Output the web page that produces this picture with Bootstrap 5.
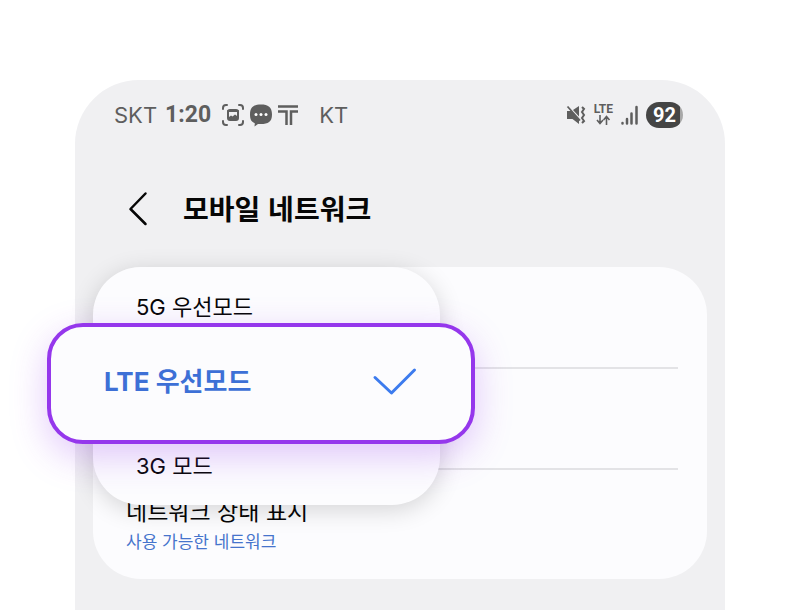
<!DOCTYPE html>
<html lang="ko">
<head>
<meta charset="utf-8">
<meta name="viewport" content="width=device-width, initial-scale=1">
<title>모바일 네트워크</title>
<link href="https://cdn.jsdelivr.net/npm/bootstrap@5.3.0/dist/css/bootstrap.min.css" rel="stylesheet">
<style>
body { background: #fff; color: #060606; font-family: Inter, "Noto Sans CJK KR", sans-serif; }
.stage { padding: 80px 75px 0; }
.phone { background: #f0f0f2; border-radius: 64px 64px 0 0; padding: 18px 18px 0; }
.status { height: 33px; padding: 0 24px 0 21px; color: #5e5e5e; }
.carrier { font: 400 22px/32px Inter, sans-serif; }
.clock { font: 700 23px/32px Roboto, sans-serif; margin-right: 10px; }
.lte { font: 700 12px/11px Roboto, sans-serif; }
.battery { background: linear-gradient(90deg, #454545 93%, #a8a8a8 93%); color: #fff; border-radius: 13px; width: 37px; height: 26px; font: 700 20px/26px Roboto, sans-serif; }
.topbar { height: 136px; padding: 17px 32px 0; }
.back { color: #060606; }
.heading { font-family: "Noto Sans CJK KR", sans-serif; font-size: 28px; line-height: 40px; font-weight: 700; }
.panel { background: #fcfcfe; border-radius: 48px; padding: 0 29px 23px 33px; }
.setting { height: 102px; border-bottom: 2px solid #e3e3e6; }
.setting + .setting { height: 101px; }
.state { padding-top: 26px; color: #060606; }
.state-name { font-size: 23px; line-height: 32px; }
.state-note { font-size: 17px; line-height: 28px; color: #4674cc; }
.modes { width: 347px; border-radius: 48px; background: #fcfcfe; box-shadow: 0 5px 24px rgba(0,0,0,.16); }
.mode { font-size: 22px; line-height: 32px; padding: 0 43px; color: #060606; }
.mode-first { padding-top: 24px; }
.mode-last { padding-top: 6px; padding-bottom: 23px; }
.mode-on { margin: 0 -35px 0 -46px; height: 121px; border: 4px solid #9537ec; border-radius: 36px; background: #fcfcfe; padding: 0 54px 4px 53px; color: #3d70d6; font-size: 26px; line-height: 40px; font-weight: 700; box-shadow: 0 12px 36px rgba(149,55,236,.27); }
.tick { margin-bottom: 2px; }
</style>
<script src="https://cdn.jsdelivr.net/npm/bootstrap@5.3.0/dist/js/bootstrap.bundle.min.js"></script>
</head>
<body>
<div class="stage min-vh-100 d-flex flex-column">
<main class="phone flex-grow-1">
  <div class="status d-flex align-items-center justify-content-between">
    <div class="d-flex align-items-center">
      <span class="carrier me-2">SKT</span>
      <span class="clock">1:20</span>
      <svg class="me-1" width="24" height="24" viewBox="0 0 24 24" fill="none" stroke="currentColor" stroke-width="2" stroke-linecap="round" aria-hidden="true"><path d="M2 6V5q0-3 3-3h1M18 2h1q3 0 3 3v1M22 18v1q0 3-3 3h-1M6 22H5q-3 0-3-3v-1"/><rect x="7" y="7" width="10" height="10" rx="2"/><path d="M7 8h10" stroke-width="2"/><path d="M8 16v-2l2-1.500 1.500 1 2.500-2 2 1.500v3H8z" fill="currentColor" stroke="none"/></svg>
      <svg width="24" height="24" viewBox="0 0 24 24" aria-hidden="true"><path fill="currentColor" d="M12 1.500C19 1.500 23 4 23 11.500S19 21 12 21H9l-3.500 2.500.3-3.300C2 18.500 1 16 1 11.500 1 4 5 1.500 12 1.500z"/><g fill="#fff"><circle cx="7" cy="11.500" r="1.500"/><circle cx="12" cy="11.500" r="1.500"/><circle cx="17" cy="11.500" r="1.500"/></g></svg>
      <svg class="ms-1 me-3" width="22" height="22" viewBox="0 0 22 22" fill="none" stroke="currentColor" stroke-width="2.500" aria-hidden="true"><path d="M1 2.500h20M1 7.500h8.500v13.500M21 7.500h-7v13.500"/></svg>
      <span class="carrier ms-1">KT</span>
    </div>
    <div class="d-flex align-items-center">
      <svg class="me-2" width="20" height="22" viewBox="0 0 20 22" aria-hidden="true"><path fill="currentColor" d="M1 7h4l8 8.500V20L6.500 15H1zM7 6l6-4v10.500z"/><path d="M1.500 2.500l12.500 14" stroke="currentColor" stroke-width="1.800"/><path d="M16 3l2 2-2 3 2 3-2 3 2 3-2 2" fill="none" stroke="currentColor" stroke-width="2"/></svg>
      <span class="d-flex flex-column align-items-center me-2"><span class="lte">LTE</span><svg width="16" height="10" viewBox="0 0 16 10" fill="none" stroke="currentColor" stroke-width="1.600" aria-hidden="true"><path d="M5 0v8M2 5l3 3.500L8 5M11.500 10V2M8.500 5l3-3.500 3 3.500"/></svg></span>
      <svg class="me-2" width="17" height="20" viewBox="0 0 17 20" stroke="currentColor" stroke-width="2.500" stroke-linecap="round" aria-hidden="true"><path d="M1.500 18v.5M6 14v4.500M10.500 8.500v10M15.500 2v16.500"/></svg>
      <span class="battery text-center">92</span>
    </div>
  </div>

  <header class="topbar d-flex align-items-center">
    <button type="button" class="back btn border-0 p-0 me-4" aria-label="뒤로"><svg class="d-block" width="34" height="38" viewBox="0 0 34 38" fill="none" stroke="currentColor" stroke-width="2.500" stroke-linecap="round" stroke-linejoin="round"><path d="M20.500 4.500L5.500 20 20.500 35"/></svg></button>
    <h1 class="heading mb-0">모바일 네트워크</h1>
  </header>

  <section class="panel position-relative">
    <div class="setting"></div>
    <div class="setting"></div>
    <a href="#" class="state d-block text-decoration-none"><span class="state-name d-block">네트워크 상태 표시</span><span class="state-note d-block">사용 가능한 네트워크</span></a>
    <div class="modes position-absolute top-0 start-0" role="listbox" aria-label="네트워크 모드">
      <button type="button" role="option" aria-selected="false" class="mode mode-first d-block w-100 border-0 bg-transparent text-start">5G 우선모드</button>
      <div class="d-flex"><button type="button" role="option" aria-selected="true" class="mode-on position-relative flex-grow-1 d-flex align-items-center justify-content-between"><span>LTE 우선모드</span><svg class="tick" width="46" height="32" viewBox="0 0 46 32" fill="none" stroke="#3c7bee" stroke-width="3" stroke-linecap="round" stroke-linejoin="round" aria-hidden="true"><path d="M4 12.500L20.500 28 43.500 5"/></svg></button></div>
      <button type="button" role="option" aria-selected="false" class="mode mode-last d-block w-100 border-0 bg-transparent text-start">3G 모드</button>
    </div>
  </section>
</main>
</div>
</body>
</html>
